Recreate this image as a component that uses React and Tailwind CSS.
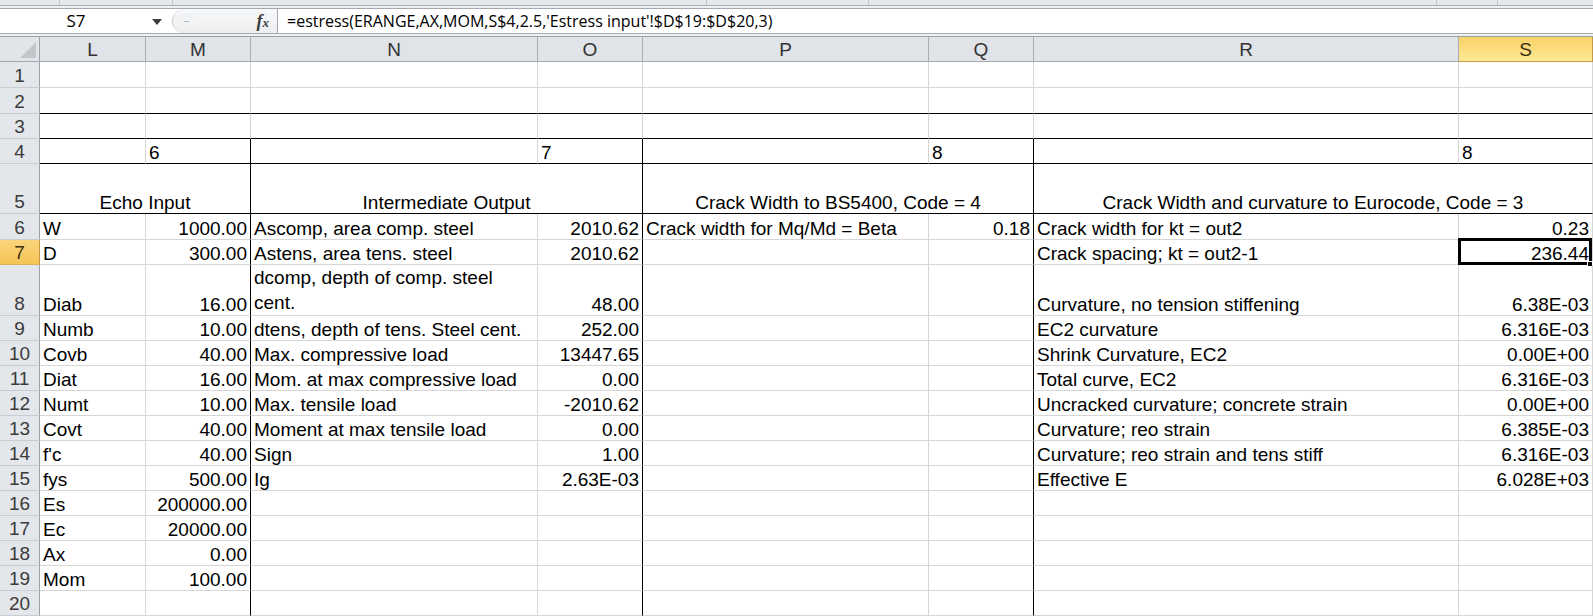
import React from 'react'
import clsx from 'clsx'

const COLS = [
    { id: 'L', w: 'w-[106px]' },
    { id: 'M', w: 'w-[105px]' },
    { id: 'N', w: 'w-[287px]' },
    { id: 'O', w: 'w-[105px]' },
    { id: 'P', w: 'w-[286px]' },
    { id: 'Q', w: 'w-[105px]' },
    { id: 'R', w: 'w-[425px]' },
    { id: 'S', w: 'w-[134px]' },
]

// right-aligned numeric cell
const n = (t) => ({ t, r: true })

const ROWS = [
    { no: 1, h: 'h-[26px]', cells: [] },
    { no: 2, h: 'h-[26px]', cells: [], blackBottom: true },
    { no: 3, h: 'h-[25px]', cells: [], blackBottom: true },
    { no: 4, h: 'h-[25px]', cells: ['', '6', '', '7', '', '8', '', '8'], blackBottom: true },
    { no: 5, h: 'h-[50px]', merged: true },
    { no: 6, h: 'h-[26px]', cells: ['W', n('1000.00'), 'Ascomp, area comp. steel', n('2010.62'), 'Crack width for Mq/Md = Beta', n('0.18'), 'Crack width for kt = out2', n('0.23')] },
    { no: 7, h: 'h-[25px]', cells: ['D', n('300.00'), 'Astens, area tens. steel', n('2010.62'), '', '', 'Crack spacing; kt = out2-1', n('236.44')], active: true },
    { no: 8, h: 'h-[51px]', cells: ['Diab', n('16.00'), { t: 'dcomp, depth of comp. steel', t2: 'cent.' }, n('48.00'), '', '', 'Curvature, no tension stiffening', n('6.38E-03')] },
    { no: 9, h: 'h-[25px]', cells: ['Numb', n('10.00'), 'dtens, depth of tens. Steel cent.', n('252.00'), '', '', 'EC2 curvature', n('6.316E-03')] },
    { no: 10, h: 'h-[25px]', cells: ['Covb', n('40.00'), 'Max. compressive load', n('13447.65'), '', '', 'Shrink Curvature, EC2', n('0.00E+00')] },
    { no: 11, h: 'h-[25px]', cells: ['Diat', n('16.00'), 'Mom. at max compressive load', n('0.00'), '', '', 'Total curve, EC2', n('6.316E-03')] },
    { no: 12, h: 'h-[25px]', cells: ['Numt', n('10.00'), 'Max. tensile load', n('-2010.62'), '', '', 'Uncracked curvature; concrete strain', n('0.00E+00')] },
    { no: 13, h: 'h-[25px]', cells: ['Covt', n('40.00'), 'Moment at max tensile load', n('0.00'), '', '', 'Curvature; reo strain', n('6.385E-03')] },
    { no: 14, h: 'h-[25px]', cells: ["f'c", n('40.00'), 'Sign', n('1.00'), '', '', 'Curvature; reo strain and tens stiff', n('6.316E-03')] },
    { no: 15, h: 'h-[25px]', cells: ['fys', n('500.00'), 'Ig', n('2.63E-03'), '', '', 'Effective E', n('6.028E+03')] },
    { no: 16, h: 'h-[25px]', cells: ['Es', n('200000.00')] },
    { no: 17, h: 'h-[25px]', cells: ['Ec', n('20000.00')] },
    { no: 18, h: 'h-[25px]', cells: ['Ax', n('0.00')] },
    { no: 19, h: 'h-[25px]', cells: ['Mom', n('100.00')] },
    { no: 20, h: 'h-[25px]', cells: [] },
]

const TITLES = [
    { w: 'w-[211px]', t: 'Echo Input', black: true },
    { w: 'w-[392px]', t: 'Intermediate Output', black: true },
    { w: 'w-[391px]', t: 'Crack Width to BS5400, Code = 4', black: true },
    { w: 'w-[559px]', t: 'Crack Width and curvature to Eurocode, Code = 3' },
]

const RowHead = ({ no, active }) => (
    <div
        className={clsx(
            'flex w-[40px] shrink-0 items-end justify-center border-r border-b pb-[1px] text-[19px] leading-[21px]',
            active
                ? 'border-r-[#c29a45] border-b-[#d7b060] bg-linear-to-b from-[#f9d57c] to-[#f5c453] text-[#3a2e10]'
                : 'border-r-[#9ea3a9] border-b-[#c9cdd2] bg-[#e3e6ea] text-[#3b3b3b]'
        )}
    >
        {no}
    </div>
)

const Cell = ({ w, cell, blackRight, blackBottom, children }) => {
    const c = typeof cell === 'string' || cell === undefined ? { t: cell || '' } : cell
    return (
        <div
            className={clsx(
                'relative flex shrink-0 items-end border-r border-b px-[3px] text-[19px] leading-[21px] whitespace-nowrap',
                w,
                c.r ? 'justify-end' : 'justify-start',
                blackRight ? 'border-r-black' : 'border-r-[#d6d6d6]',
                blackBottom ? 'border-b-black' : 'border-b-[#d6d6d6]'
            )}
        >
            {c.t2 ? (
                <div className="leading-[25px]">
                    {c.t}
                    <br />
                    {c.t2}
                </div>
            ) : (
                <span>{c.t}</span>
            )}
            {children}
        </div>
    )
}

const Ribbon = () => (
    <div className="flex h-[6px] border-b border-[#a9adb2] bg-[#e6e9ec]">
        <div className="w-[60px] border-r border-[#c3c7cc]" />
        <div className="w-[113px] border-r border-[#c3c7cc]" />
        <div className="w-[534px] border-r border-[#c3c7cc]" />
        <div className="w-[162px] border-r border-[#c3c7cc]" />
        <div className="w-[568px] border-r border-[#c3c7cc]" />
        <div className="w-[61px] border-r border-[#c3c7cc]" />
        <div className="flex-1" />
    </div>
)

const FormulaBar = () => (
    <div className="bg-[#eef0f2] pt-[2px] pb-[2px]">
        <div className="flex h-[26px] border-y border-[#a6aab0] bg-white font-['Open_Sans'] text-[16px] text-black">
            <div className="flex w-[172px] shrink-0 items-center">
                <span className="w-[152px] text-center text-[17px]">S7</span>
                <svg width="10" height="6" viewBox="0 0 10 6" className="mt-[1px]">
                    <polygon points="0,0 10,0 5,6" fill="#3c3c3c" />
                </svg>
            </div>
            <div className="relative flex w-[105px] shrink-0 items-center rounded-l-[13px] border-l border-[#c9cdd2] bg-linear-to-b from-[#f7f8f9] to-[#eceef0]">
                <div className="ml-[4px] flex h-[18px] w-[18px] items-center justify-center rounded-full bg-[#f1f2f4]">
                    <div className="h-[1px] w-[5px] bg-[#b5b9be]" />
                </div>
                <span className="mr-[8px] ml-auto font-['Liberation_Serif'] text-[18px] font-bold italic leading-none text-[#3c3c3c]">
                    f<span className="text-[13px]">x</span>
                </span>
            </div>
            <div className="flex flex-1 items-center border-l border-[#a6aab0] pl-[9px] whitespace-nowrap">
                =estress(ERANGE,AX,MOM,S$4,2.5,'Estress input'!$D$19:$D$20,3)
            </div>
        </div>
    </div>
)

const ColumnHeads = () => (
    <div className="flex h-[26px] border-t border-[#9a9fa5]">
        <div className="relative w-[40px] shrink-0 border-r border-b border-r-[#9ea3a9] border-b-[#a3a8ae] bg-[#e1e4e8]">
            <svg className="absolute right-[3px] bottom-[3px]" width="16" height="16" viewBox="0 0 16 16">
                <polygon points="16,0 16,16 0,16" fill="#c3c7cc" />
            </svg>
        </div>
        {COLS.map((col) => (
            <div
                key={col.id}
                className={clsx(
                    'flex shrink-0 items-center justify-center border-r border-b text-[19px] leading-none',
                    col.w,
                    col.id === 'S'
                        ? 'border-r-[#c29a45] border-b-[#c29a45] bg-linear-to-b from-[#f9d265] to-[#fde994] text-[#3a2e10]'
                        : 'border-r-[#a9aeb4] border-b-[#a3a8ae] bg-[#e0e3e7] text-[#333]'
                )}
            >
                {col.id}
            </div>
        ))}
    </div>
)

const Row = ({ row }) => {
    if (row.merged) {
        return (
            <div className={clsx('flex', row.h)}>
                <RowHead no={row.no} />
                {TITLES.map((m) => (
                    <div
                        key={m.t}
                        className={clsx(
                            'flex shrink-0 items-end justify-center border-r border-b border-b-black text-[19px] leading-[21px] whitespace-nowrap',
                            m.w,
                            m.black ? 'border-r-black' : 'border-r-[#d6d6d6]'
                        )}
                    >
                        {m.t}
                    </div>
                ))}
            </div>
        )
    }
    const boxed = row.no >= 4
    return (
        <div className={clsx('flex', row.h)}>
            <RowHead no={row.no} active={row.active} />
            {COLS.map((col, i) => (
                <Cell
                    key={col.id}
                    w={col.w}
                    cell={row.cells[i]}
                    blackRight={boxed && (i === 1 || i === 3 || i === 5)}
                    blackBottom={row.blackBottom}
                >
                    {row.active && col.id === 'S' && (
                        <>
                            <div className="pointer-events-none absolute -top-[2px] -left-[1px] right-0 -bottom-[1px] border-[3px] border-black" />
                            <div className="absolute -right-[1px] -bottom-[3px] h-[6px] w-[6px] border border-white bg-black" />
                        </>
                    )}
                </Cell>
            ))}
        </div>
    )
}

export default function App() {
    return (
        <div className="h-[616px] w-[1593px] overflow-hidden bg-white font-['Liberation_Sans'] text-black">
            <Ribbon />
            <FormulaBar />
            <ColumnHeads />
            {ROWS.map((row) => (
                <Row key={row.no} row={row} />
            ))}
        </div>
    )
}
